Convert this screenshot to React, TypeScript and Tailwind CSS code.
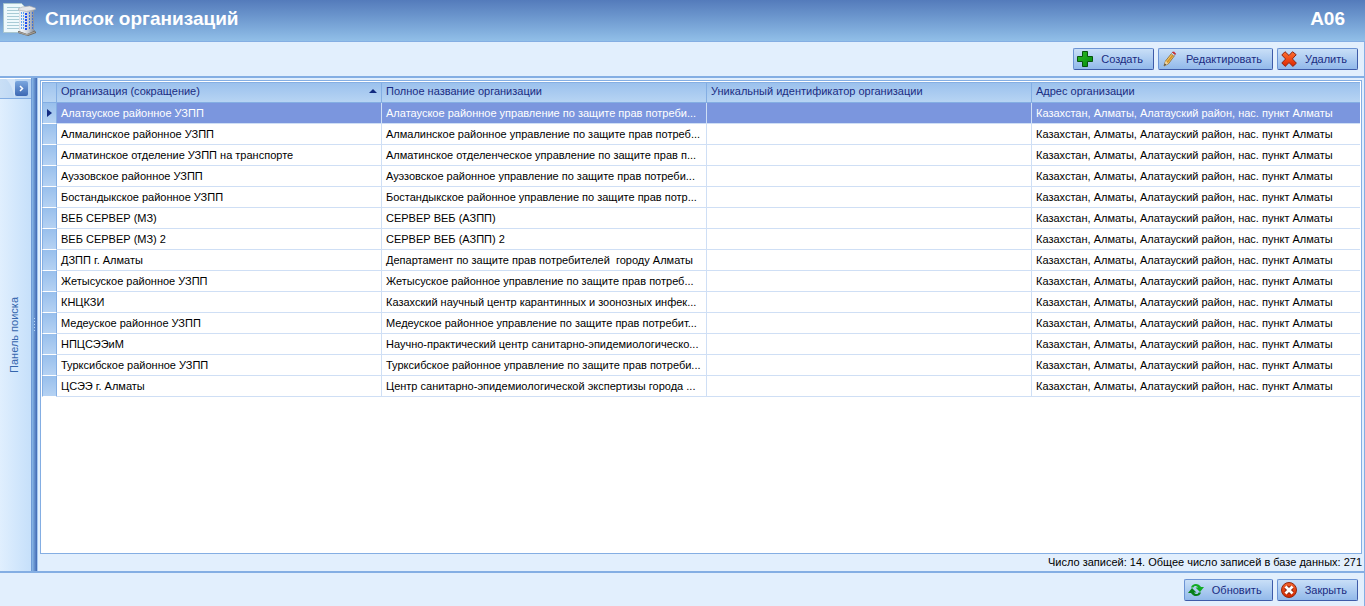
import type { ReactNode } from "react";

const ADDRESS = "Казахстан, Алматы, Алатауский район, нас. пункт Алматы";

const ROWS: [string, string][] = [
  ["Алатауское районное УЗПП", "Алатауское районное управление по защите прав потреби..."],
  ["Алмалинское районное УЗПП", "Алмалинское районное управление по защите прав потреб..."],
  ["Алматинское отделение УЗПП на транспорте", "Алматинское отделенческое управление по защите прав п..."],
  ["Ауэзовское районное УЗПП", "Ауэзовское районное управление по защите прав потреби..."],
  ["Бостандыкское районное УЗПП", "Бостандыкское районное управление по защите прав потр..."],
  ["ВЕБ СЕРВЕР (МЗ)", "СЕРВЕР ВЕБ (АЗПП)"],
  ["ВЕБ СЕРВЕР (МЗ) 2", "СЕРВЕР ВЕБ (АЗПП) 2"],
  ["ДЗПП г. Алматы", "Департамент по защите прав потребителей  городу Алматы"],
  ["Жетысуское районное УЗПП", "Жетысуское районное управление по защите прав потреб..."],
  ["КНЦКЗИ", "Казахский научный центр карантинных и зоонозных инфек..."],
  ["Медеуское районное УЗПП", "Медеуское районное управление по защите прав потребит..."],
  ["НПЦСЭЭиМ", "Научно-практический центр санитарно-эпидемиологическо..."],
  ["Турксибское районное УЗПП", "Турксибское районное управление по защите прав потреби..."],
  ["ЦСЭЭ г. Алматы", "Центр санитарно-эпидемиологической экспертизы города ..."],
];

const COLUMNS = [
  "Организация (сокращение)",
  "Полное название организации",
  "Уникальный идентификатор организации",
  "Адрес организации",
];

function AppIcon() {
  const floors = [11, 14, 17, 20, 23, 26];
  return (
    <svg width="34" height="36" viewBox="0 0 34 36" aria-hidden="true">
      <defs>
        <linearGradient id="tower" x1="0" x2="1">
          <stop offset="0" stopColor="#d9dde2" />
          <stop offset="0.15" stopColor="#f4f6f8" />
          <stop offset="0.5" stopColor="#d5dae1" />
          <stop offset="0.65" stopColor="#c2c9d3" />
          <stop offset="1" stopColor="#878e9b" />
        </linearGradient>
      </defs>
      <path d="M1.500 2.500h18l3.500 3.500V31.500H1.500z" fill="#eef9fc" stroke="#a9c6cf" />
      <path d="M5 6.500h13M5 9.500h13M5 12.500h12M5 15.500h12M5 18.500h12M5 21.500h12M5 24.500h12M5 27.500h12" stroke="#a8cbd6" />
      <path d="M16 30l16-1 2 2v1l-8 3-10-3z" fill="#6d675f" />
      <path d="M17 8.500l7 1.500 8-2v22l-7 3-8-3z" fill="url(#tower)" />
      <path d="M16.500 7.500l4-1.500 7-1 6 2v1.500l-9 2-8-1.500z" fill="#e6e7e9" stroke="#a3a6aa" strokeWidth=".6" />
      {floors.map((y) => (
        <g key={y}>
          <path d={`M19 ${y}h1v2h-1zM21 ${y}h1v2h-1z`} fill="#5aa4f4" />
          <path d={`M23 ${y + 1}h2v2h-2z`} fill="#1f4ff0" />
          <path d={`M27 ${y}h1v2h-1zM30 ${y}h1v2h-1z`} fill="#3c72de" />
        </g>
      ))}
      <path d="M16 30.500l9 2.500 8-2.500v1l-8 3-9-3z" fill="#a5a19a" />
    </svg>
  );
}

function PlusIcon() {
  return (
    <svg width="16" height="16" viewBox="0 0 16 16" aria-hidden="true">
      <defs>
        <linearGradient id="plus" x2="1" y2="1">
          <stop stopColor="#30ba28" />
          <stop offset="1" stopColor="#008a0c" />
        </linearGradient>
      </defs>
      <path d="M5.500.5h5v5h5v5h-5v5h-5v-5h-5v-5h5z" fill="url(#plus)" stroke="#07530f" />
    </svg>
  );
}

function PencilIcon() {
  return (
    <svg width="16" height="16" viewBox="0 0 16 16" aria-hidden="true">
      <path d="M2 15l1.500-5 6-7.500 3 2.200-6 8z" fill="#f3c65f" stroke="#86642c" strokeWidth=".8" />
      <path d="M5 11.500l6-7.500" stroke="#d2902b" strokeWidth="1.500" />
      <path d="M2 15l1.500-5 2.700 2.500z" fill="#e9d3a8" />
      <path d="M2 15l.8-2.500 1.200 1z" fill="#222" />
      <path d="M9.300 2.700l1-1.300 2.900 2.200-1 1.300z" fill="#dce4ec" stroke="#71808f" strokeWidth=".5" />
      <path d="M10.300 1.400c1-1.500 4.300.8 2.900 2.200z" fill="#e9242c" stroke="#a4141c" strokeWidth=".5" />
    </svg>
  );
}

function DeleteIcon() {
  return (
    <svg width="16" height="16" viewBox="0 0 16 16" aria-hidden="true">
      <defs>
        <linearGradient id="cross" x2="0" y2="1">
          <stop stopColor="#ff7130" />
          <stop offset="1" stopColor="#de2500" />
        </linearGradient>
      </defs>
      <path
        d="M4 .7L8 4.500l3.500-3.800 3.700 3-3.800 4.200 4 4.300-3.500 3.200L8 11.600l-3.800 3.800L.8 12l3.800-4L.8 4z"
        fill="url(#cross)"
        stroke="#8e2410"
        strokeLinejoin="round"
      />
    </svg>
  );
}

function RefreshIcon() {
  return (
    <svg width="16" height="16" viewBox="0 0 16 16" aria-hidden="true">
      <path d="M3 5.500C4 1.200 10.500.5 13 5h3l-4 5-4.500-4.500H10C8.500 3.500 6 3.500 5.500 5.500z" fill="#12ab25" />
      <path d="M13 10.500c-1 4.300-7.500 5-10 .5H0l4-5 4.500 4.500H6c1.500 2 4 2 4.500 0z" fill="#078018" />
    </svg>
  );
}

function CloseIcon() {
  return (
    <svg width="16" height="16" viewBox="0 0 16 16" aria-hidden="true">
      <defs>
        <linearGradient id="disc" x2="0" y2="1">
          <stop stopColor="#f4652d" />
          <stop offset="1" stopColor="#cf2500" />
        </linearGradient>
      </defs>
      <circle cx="8" cy="8" r="7.500" fill="url(#disc)" stroke="#92280f" />
      <path d="M5 5l6 6m0-6l-6 6" stroke="#7d1c08" strokeWidth="4.500" />
      <path d="M4.500 4.500l7 7m0-7l-7 7" stroke="#fff" strokeWidth="2.800" />
    </svg>
  );
}

function ToolButton({ icon, children }: { icon: ReactNode; children: ReactNode }) {
  return (
    <button
      type="button"
      className="flex h-[22px] items-center gap-2 whitespace-nowrap rounded-xs border border-[#6b93d4] border-r-[#3e5ba8] border-b-[#3e5ba8] bg-linear-to-b from-[#c9dff7] to-[#92b9ea] pl-[3px] pr-2.5 text-[#1a2c82]"
    >
      {icon}
      {children}
    </button>
  );
}

export default function App() {
  return (
    <div className="flex h-screen flex-col bg-[#e2effd] font-['Liberation_Sans',Arial,sans-serif] text-[11px] leading-[14px] text-black">
      <header className="flex h-[42px] shrink-0 items-center border-b border-[#84aee3] bg-linear-to-b from-[#547bbb] to-[#91bfe8] pb-1 pl-0.5 pr-5 text-white">
        <AppIcon />
        <h1 className="ml-[9px] text-[19px] font-bold leading-6">Список организаций</h1>
        <span className="ml-auto text-[19px] font-bold leading-6">A06</span>
      </header>

      <div className="flex min-h-0 flex-1 flex-col border-r border-[#84aee3]">
        <div className="flex h-9 shrink-0 items-center justify-end gap-1 border-b-2 border-[#84aee3] pr-1.5">
          <ToolButton icon={<PlusIcon />}>Создать</ToolButton>
          <ToolButton icon={<PencilIcon />}>Редактировать</ToolButton>
          <ToolButton icon={<DeleteIcon />}>Удалить</ToolButton>
        </div>

        <div className="flex min-h-0 flex-1">
          <aside className="flex w-[31px] shrink-0 flex-col bg-linear-to-r from-[#e0effe] to-[#c6e0fa]">
            <div className="flex h-[21px] shrink-0 items-center justify-end border-b border-[#84aee3] border-t border-t-white bg-linear-to-r from-[#c9dff6] to-[#b4d2f3] pr-[3px]">
              <svg width="9" height="19" viewBox="0 0 9 19" aria-hidden="true">
                <path d="M0 0h9v19C7 12 5 4 0 0z" fill="#d3e5f9" />
              </svg>
              <button
                type="button"
                aria-label="Развернуть"
                className="flex h-[15px] w-[13px] items-center justify-center rounded-xs bg-linear-to-b from-[#7ba7df] to-[#3d68b3] text-white"
              >
                <svg width="5" height="7" viewBox="0 0 5 7" fill="none" stroke="currentColor" strokeWidth="1.500" aria-hidden="true">
                  <path d="M1 1l2.500 2.500L1 6" />
                </svg>
              </button>
            </div>
            <div className="flex flex-1 items-center justify-center pr-1 text-[#3566ad]">
              <span className="rotate-180 whitespace-nowrap [writing-mode:vertical-rl]">Панель поиска</span>
            </div>
          </aside>
          <div className="flex w-[7px] shrink-0 flex-col items-center justify-center gap-0.5 border-r border-r-[#a5c8f0] border-l border-l-[#6f9bd6] bg-linear-to-r from-[#8bb9e8] to-[#4269b3]">
            <i className="size-px bg-[#b9d6f5]" />
            <i className="size-px bg-[#b9d6f5]" />
            <i className="size-px bg-[#b9d6f5]" />
            <i className="size-px bg-[#b9d6f5]" />
            <i className="size-px bg-[#b9d6f5]" />
          </div>

          <main className="flex min-w-0 flex-1 flex-col pl-0.5 pr-0.5 pt-[2px]">
            <div className="min-h-0 flex-1 overflow-hidden border border-[#84aee3] bg-white p-px">
              <table className="w-full table-fixed border-separate border-spacing-0">
                <colgroup>
                  <col className="w-[15px]" />
                  <col className="w-[325px]" />
                  <col className="w-[325px]" />
                  <col className="w-[325px]" />
                  <col />
                </colgroup>
                <thead>
                  <tr className="h-[21px] text-[#1a2c82]">
                    <th className="border border-[#84aee3] bg-linear-to-b from-[#a0c4ee] to-[#b7d4f3] p-0" />
                    {COLUMNS.map((name, i) => (
                      <th
                        key={name}
                        scope="col"
                        className="border-b border-t border-[#84aee3] bg-linear-to-b from-[#9bc1ed] to-[#b7d4f3] px-1 pt-0 pb-1 text-left font-normal whitespace-nowrap not-last:border-r"
                      >
                        <div className="flex items-center justify-between">
                          {name}
                          {i === 0 && (
                            <svg width="8" height="4" viewBox="0 0 8 4" className="shrink-0" aria-hidden="true">
                              <path d="M0 4L4 0l4 4z" fill="#122a80" />
                            </svg>
                          )}
                        </div>
                      </th>
                    ))}
                  </tr>
                </thead>
                <tbody>
                  {ROWS.map(([name, full], i) => (
                    <tr
                      key={name}
                      aria-selected={i === 0}
                      className="h-[21px] whitespace-pre aria-selected:bg-[#7b96de] aria-selected:text-white"
                    >
                      <td className="border-x border-b border-x-[#84aee3] border-b-white bg-linear-to-b from-[#98bfec] to-[#b5d2f3] p-0">
                        {i === 0 && (
                          <svg width="5" height="8" viewBox="0 0 5 8" className="ml-1" aria-hidden="true">
                            <path d="M0 0l5 4-5 4z" fill="#122a80" />
                          </svg>
                        )}
                      </td>
                      <td className="overflow-hidden border-r border-b border-[#cfdff5] p-0 pl-1">{name}</td>
                      <td className="overflow-hidden border-r border-b border-[#cfdff5] p-0 pl-1">{full}</td>
                      <td className="border-r border-b border-[#cfdff5] p-0" />
                      <td className="overflow-hidden border-b border-[#cfdff5] p-0 pl-1">{ADDRESS}</td>
                    </tr>
                  ))}
                </tbody>
              </table>
            </div>
            <p className="h-[17px] shrink-0 pt-px text-right">
              Число записей: 14. Общее число записей в базе данных: 271
            </p>
          </main>
        </div>

        <footer className="flex h-[35px] shrink-0 items-center justify-end gap-1 border-t-2 border-[#84aee3] pr-1.5">
          <ToolButton icon={<RefreshIcon />}>Обновить</ToolButton>
          <ToolButton icon={<CloseIcon />}>Закрыть</ToolButton>
        </footer>
      </div>
    </div>
  );
}
